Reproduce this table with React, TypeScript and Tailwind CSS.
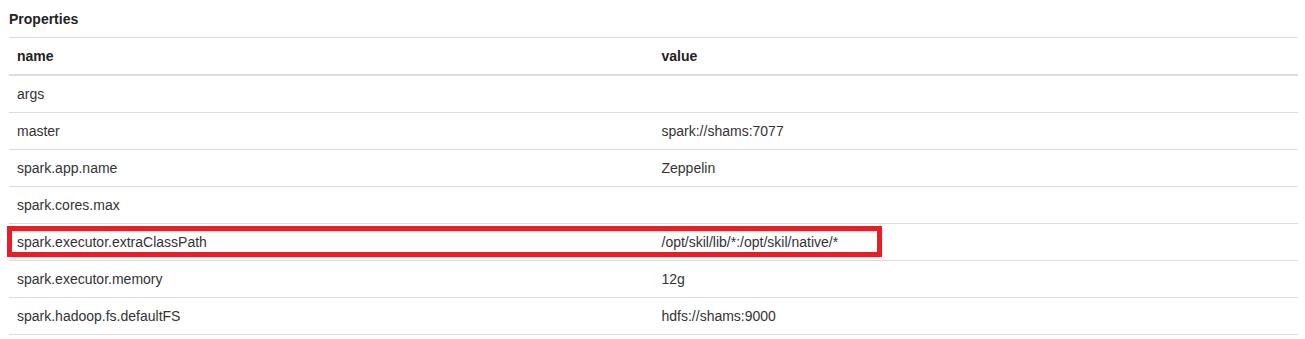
const rows: [string, string][] = [
  ['args', ''],
  ['master', 'spark://shams:7077'],
  ['spark.app.name', 'Zeppelin'],
  ['spark.cores.max', ''],
  ['spark.executor.extraClassPath', '/opt/skil/lib/*:/opt/skil/native/*'],
  ['spark.executor.memory', '12g'],
  ['spark.hadoop.fs.defaultFS', 'hdfs://shams:9000'],
];

export default function App() {
  return (
    <div className="min-h-[339px] w-[1305px] bg-white pl-[9px] pr-[7px] font-['Liberation_Sans',Arial,sans-serif] text-[14px] text-[#333]">
      {/* Title */}
      <div className="h-[37px] pt-[10px] text-[14px] font-bold leading-[18px] text-[#222]">Properties</div>

      <div className="relative">
        <table className="w-full border-collapse">
          <thead>
            <tr className="border-t border-b-2 border-[#ddd]">
              <th className="w-1/2 p-[8px] text-left font-bold leading-[20px] text-[#222]">name</th>
              <th className="w-1/2 p-[8px] text-left font-bold leading-[20px] text-[#222]">value</th>
            </tr>
          </thead>
          <tbody>
            {rows.map(([name, value]) => (
              <tr key={name} className="border-b border-[#ddd]">
                <td className="p-[8px] leading-[20px]">{name}</td>
                <td className="p-[8px] leading-[20px]">{value}</td>
              </tr>
            ))}
          </tbody>
        </table>

        {/* red annotation box */}
        <div className="pointer-events-none absolute left-[-2px] top-[189px] h-[31px] w-[875px] border-[5px] border-[#ed1c24]" />
      </div>
    </div>
  );
}
